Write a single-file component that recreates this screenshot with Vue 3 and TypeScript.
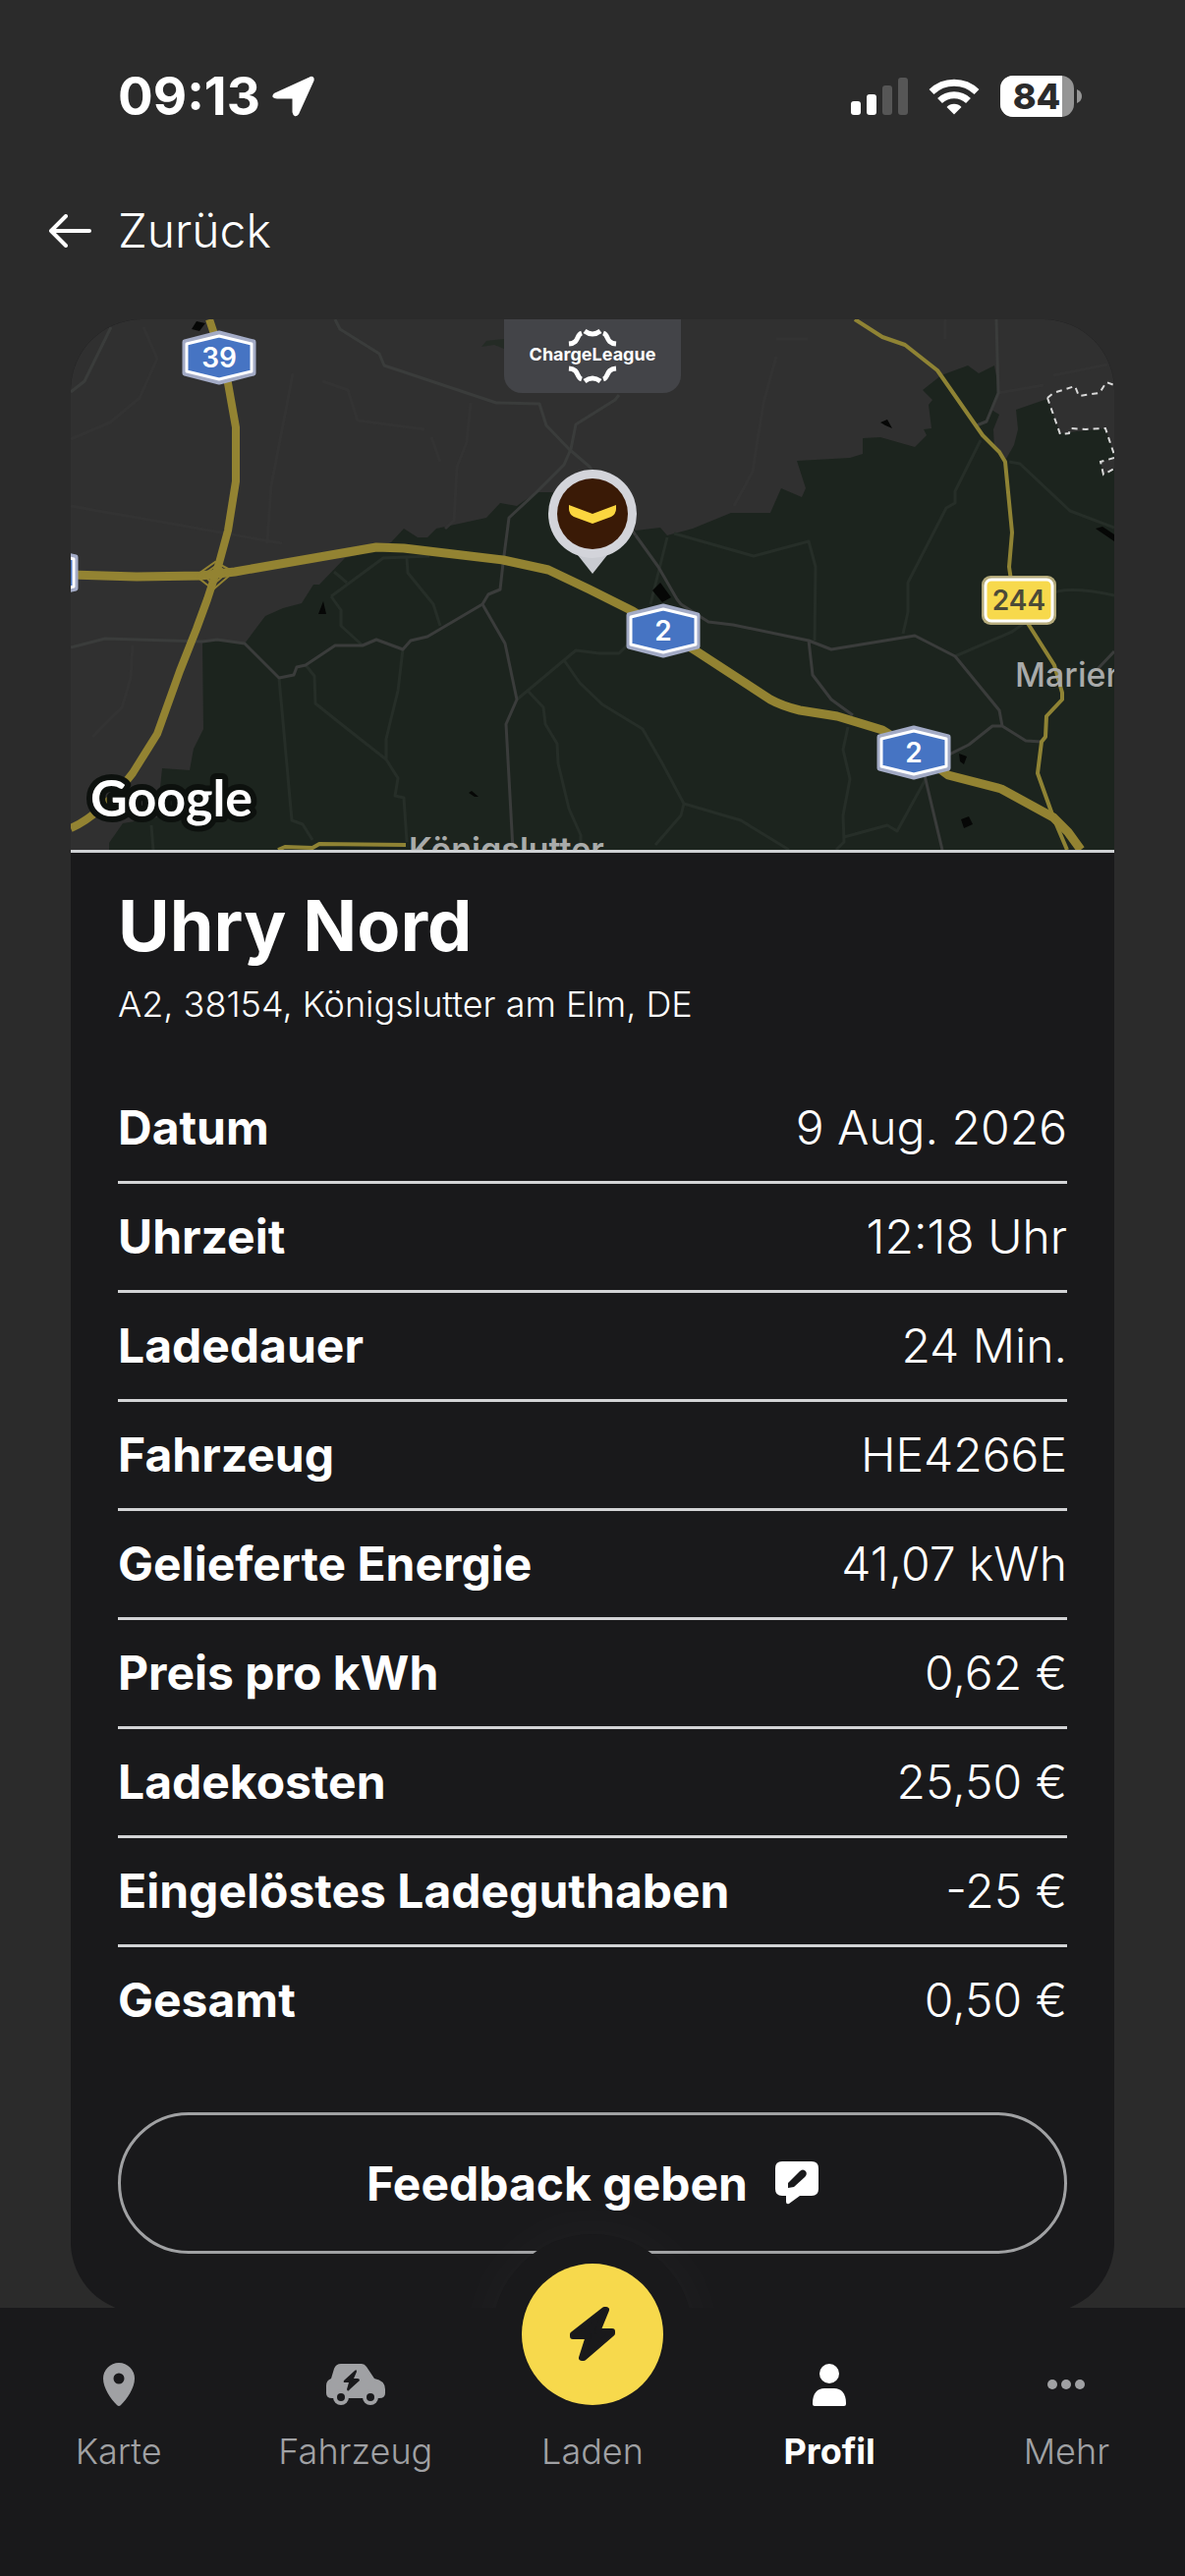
<script setup lang="ts">
interface Detail {
  label: string
  value: string
}

interface Tab {
  id: string
  label: string
}

interface Shield {
  x: number
  y: number
  text: string
}

const details: Detail[] = [
  { label: 'Datum', value: '9 Aug. 2026' },
  { label: 'Uhrzeit', value: '12:18 Uhr' },
  { label: 'Ladedauer', value: '24 Min.' },
  { label: 'Fahrzeug', value: 'HE4266E' },
  { label: 'Gelieferte Energie', value: '41,07 kWh' },
  { label: 'Preis pro kWh', value: '0,62 €' },
  { label: 'Ladekosten', value: '25,50 €' },
  { label: 'Eingelöstes Ladeguthaben', value: '-25 €' },
  { label: 'Gesamt', value: '0,50 €' },
]

const tabs: Tab[] = [
  { id: 'karte', label: 'Karte' },
  { id: 'fahrzeug', label: 'Fahrzeug' },
  { id: 'laden', label: 'Laden' },
  { id: 'profil', label: 'Profil' },
  { id: 'mehr', label: 'Mehr' },
]

const activeTab = 'profil'

const motorways: Shield[] = [
  { x: 151, y: 39, text: '39' },
  { x: 603, y: 317, text: '2' },
  { x: 858, y: 441, text: '2' },
  { x: -30, y: 258, text: '' },
]
</script>

<template>
  <div class="screen">
    <header class="status">
      <div class="status-left">
        <span class="time">09:13</span>
        <svg width="44" height="42" viewBox="0 0 44 42" aria-hidden="true">
          <path d="M3 19 38 3Q42 1 41 5L26 38Q23 42 22 37V23Q22 22 21 22H5Q0 22 3 19Z" fill="#fff" stroke="#fff" stroke-width="3" stroke-linejoin="round" />
        </svg>
      </div>
      <div class="status-right">
        <svg width="58" height="38" viewBox="0 0 58 38" aria-hidden="true">
          <rect x="0" y="24" width="10" height="14" rx="3" fill="#fff" />
          <rect x="16" y="17" width="10" height="21" rx="3" fill="#fff" />
          <rect x="32" y="8" width="10" height="30" rx="3" fill="#565656" />
          <rect x="48" y="0" width="10" height="38" rx="3" fill="#565656" />
        </svg>
        <svg width="52" height="38" viewBox="0 0 52 38" aria-hidden="true">
          <g fill="none" stroke="#fff" stroke-width="7">
            <path d="M3 14.500a33 33 0 0 1 46 0" />
            <path d="M11.500 23.500a21 21 0 0 1 29 0" />
          </g>
          <path d="M26 37.500 18.500 30a10.500 10.500 0 0 1 15 0Z" fill="#fff" />
        </svg>
        <svg width="83" height="42" viewBox="0 0 83 42" aria-hidden="true">
          <defs>
            <clipPath id="battery"><rect width="75" height="42" rx="13" /></clipPath>
          </defs>
          <g clip-path="url(#battery)">
            <rect width="75" height="42" fill="#959595" />
            <rect width="63" height="42" fill="#fff" />
          </g>
          <path d="M78 14q5 2 5 7t-5 7Z" fill="#959595" />
          <text x="37" y="34" text-anchor="middle" class="battery-text">84</text>
        </svg>
      </div>
    </header>

    <button class="back" type="button">
      <svg width="44" height="34" viewBox="0 0 44 34" fill="none" stroke="#fff" stroke-width="4" stroke-linecap="round" stroke-linejoin="round" aria-hidden="true">
        <path d="M42 17H3M18 2 3 17 18 32" />
      </svg>
      <span>Zurück</span>
    </button>

    <main class="card">
      <div class="map">
        <svg class="map-canvas" viewBox="0 0 1062 540" preserveAspectRatio="xMidYMid slice" role="img" aria-label="Kartenausschnitt">
          <rect width="1062" height="540" fill="#303030" />
          <path
            fill="#1c241e"
            d="M39 540V533L53 513 88 507 93 457 121 459 125 437 135 417 134 328 149 326 177 330 198 302 216 294 235 289 247 270 253 270 279 243 311 235 326 227 339 213 353 222 363 222 372 213 423 202 437 187 454 190 474 176H520L575 215 600 212 607 220 633 213 672 197H712L723 172 744 181 748 172 739 144 793 141 806 137V121L824 120 859 130 871 118 868 112 876 111 873 87 877 82 867 72 886 57 913 47 924 55 940 47 945 75 937 92 945 97 939 112 940 132 952 142 960 128 964 112 962 92 994 81 1007 116 1053 111 1062 138V540Z"
          />
          <path fill="#242b25" d="M418 28 423 22 441 20V30L431 26Z" />
          <path fill="#303030" d="M1048 145 1062 141V152L1051 158Z" />

          <g fill="none" stroke="#262e28" stroke-width="3" stroke-linejoin="round">
            <path d="M212 365 225 510 236 514 246 530M239 352 248 363 249 391 279 415 321 448 333 467 330 485 339 487 342 532M338 336 333 378 321 427V448" />
            <path d="M454 387 465 378 502 347 514 337 538 340 558 340 598 300M502 347 518 370 541 392 582 417 602 452 624 493 682 510 731 540M624 493 621 505 595 535M465 378 481 395 483 412 495 432 496 452 507 498 519 525V540" />
            <path d="M791 415 786 438 793 468 786 505 787 532 779 540M787 527 831 515 841 521 870 468M900 343 958 318 975 306 995 281Q1010 270 1062 281" />
            <path d="M614 218 695 241 751 226 758 252 757 327M926 123 900 175V187L891 192 852 268V298L847 320M955 145 966 147 1017 195 1062 212M590 290 607 222" />
            <path d="M265 282 318 243 365 241M342 243 343 258 369 290 376 312M265 282 275 296V312L297 332M268 257 281 268M82 515 84 540" />
          </g>
          <g fill="none" stroke="#333333" stroke-width="3" stroke-linejoin="round">
            <path d="M226 55 204 170 200 228M256 63 282 72 292 103 360 112M407 85 403 125 393 150 390 205 381 213M367 120 376 145M0 190 215 228M63 332 61 365 52 395 22 425M74 8 88 40 70 80 40 105 0 122" />
            <path d="M718 38 705 85 694 155 675 190M890 0V20M944 75 990 67M1000 57 1055 46M718 20 750 20" />
          </g>
          <g fill="none" stroke="#3a3c3b" stroke-width="3" stroke-linejoin="round">
            <path d="M269 0 274 10 314 35 319 47 433 85 477 86 484 108 507 132 528 150 575 220" />
            <path d="M558 77 554 82 514 107 509 132 502 148 474 176 446 202 440 248 437 275 425 280 419 290 363 323 346 327 338 336 311 326 297 332H269L239 352 230 354 227 362 212 365 177 330 149 326 134 328 35 325 0 334" />
            <path d="M419 290 442 330 454 387 443 412 450 540" />
            <path d="M575 220 598 252 617 285 621 290 649 308 674 311 751 327 774 336 859 322 900 343 945 398 948 414 972 429 988 430M948 414H938L914 433 880 450M751 327 755 362 774 387 796 403M868 460 887 540M1045 356 1062 338" />
            <path d="M942 0 944 75 932 104 922 108M41 8 14 63 0 74" />
          </g>

          <g fill="none" stroke="#8f8334" stroke-width="4" stroke-linejoin="round">
            <path d="M798 0 826 18 849 26 882 52 928 118 945 135 951 145 958 217 955 252 960 286 975 311 1001 352 1009 380V387L993 404 992 425 988 430 984 462 1000 507 1014 540" />
            <path d="M211 540 218 537 246 538 253 534 341 535" />
          </g>
          <g fill="none" stroke="#938332" stroke-width="8" stroke-linejoin="round">
            <path d="M141 0 151 30 160 65 168 110V165L160 215 151 248 139 285 128 315 111 358 88 422 63 462Q30 505 0 518" />
            <path stroke-width="9" d="M0 260 67 262 132 261 167 257 311 232 339 233 440 245 486 255 528 275 572 297 637 338 712 387Q725 394 742 398L780 404 826 418 858 438 893 464 947 478 1000 507 1015 522 1028 540" />
          </g>
          <g fill="none" stroke="#938332" stroke-width="2">
            <path d="M127 261 147 247 166 257 145 275ZM135 260 145 270 159 258 149 250Z" />
          </g>

          <g fill="#060706">
            <path d="M128 2 137 4 131 12 123 10ZM824 105 831 102 836 111 829 108ZM1043 213 1050 211 1062 219V226ZM592 276 600 268 611 283 602 288ZM257 287 252 300H260ZM408 480 415 486 411 486 405 482ZM904 442 912 445 909 453 905 450ZM906 509 914 506 918 514 909 518Z" />
          </g>
          <g fill="none" stroke="#d8d8d8" stroke-width="2" stroke-dasharray="6 5">
            <path d="M994 80 1000 75 1022 68 1026 78 1047 75 1054 64 1062 67M994 80 1007 117 1016 116 1017 111 1033 112 1053 111 1062 138M1062 141 1048 145 1051 158 1062 152" />
          </g>

          <g v-for="(shield, i) in motorways" :key="i" :transform="`translate(${shield.x} ${shield.y})`">
            <path d="M0 -25 35 -16V16L0 25 -35 16V-16Z" fill="#a3abc6" stroke="#a3abc6" stroke-width="5" stroke-linejoin="round" />
            <path d="M0 -22 33 -14V14L0 22 -33 14V-14Z" fill="#4674c3" stroke="#fff" stroke-width="3" stroke-linejoin="round" />
            <text y="10" text-anchor="middle" class="shield-text">{{ shield.text }}</text>
          </g>
          <rect x="927" y="261" width="76" height="50" rx="9" fill="#b5ab7c" />
          <rect x="931" y="265" width="68" height="42" rx="6" fill="#f7d94c" stroke="#fff" stroke-width="3" />
          <text x="965" y="296" text-anchor="middle" class="shield-text dark">244</text>

          <text x="961" y="374" class="place">Marien</text>
          <text x="344" y="552" class="place town">Königslutter</text>
          <text x="20" y="506" class="google">Google</text>

          <g>
            <path d="M516 240 531 259 546 240Z" fill="#c9cbd1" />
            <circle cx="531" cy="198" r="45" fill="#d3d4da" />
            <circle cx="531" cy="198" r="36" fill="#3a1a06" />
            <path d="M507 189 531 198 555 189V193Q555 198 550 201L531 208 512 201Q507 198 507 193Z" fill="#fbd63f" />
          </g>
        </svg>
        <div class="partner">
          <svg width="180" height="75" viewBox="0 0 180 75" role="img" aria-label="ChargeLeague">
            <g fill="none" stroke="#fff" stroke-width="5">
              <path d="M66 25C77 24 73 16 79 14M114 25C103 24 107 16 101 14M82 12Q90 18 98 12" />
              <path d="M66 50C77 51 73 59 79 61M114 50C103 51 107 59 101 61M82 63Q90 57 98 63" />
            </g>
            <text x="90" y="42" text-anchor="middle" class="partner-text">ChargeLeague</text>
          </svg>
        </div>
      </div>

      <div class="body">
        <h1>Uhry Nord</h1>
        <p class="address">A2, 38154, Königslutter am Elm, DE</p>
        <dl class="details">
          <div v-for="detail in details" :key="detail.label" class="row">
            <dt>{{ detail.label }}</dt>
            <dd>{{ detail.value }}</dd>
          </div>
        </dl>
        <button class="feedback" type="button">
          <span>Feedback geben</span>
          <svg width="44" height="44" viewBox="0 0 44 44" aria-hidden="true">
            <path d="M7 0H37Q44 0 44 7V28Q44 35 37 35H25L14 43Q11 44 11 41V35H7Q0 35 0 28V7Q0 0 7 0Z" fill="#fff" />
            <path d="M13 27V22L25 10Q28 7 31 10 33 13 30 16L19 26Z" fill="#19191b" />
          </svg>
        </button>
      </div>
    </main>

    <nav class="tabs" aria-label="Hauptnavigation">
      <a v-for="tab in tabs" :key="tab.id" :href="`#${tab.id}`" class="tab" :class="{ active: tab.id === activeTab }">
        <span class="tab-icon">
          <svg v-if="tab.id === 'karte'" width="32" height="44" viewBox="0 0 32 44" aria-hidden="true">
            <path fill="currentColor" fill-rule="evenodd" d="M16 0A16 16 0 0 1 32 16C32 26 24 37 18 43Q16 45 14 43C8 37 0 26 0 16A16 16 0 0 1 16 0ZM16 10.500A5.500 5.500 0 1 0 16 21.500 5.500 5.500 0 1 0 16 10.500Z" />
          </svg>
          <svg v-else-if="tab.id === 'fahrzeug'" width="60" height="44" viewBox="0 0 60 44" aria-hidden="true">
            <path fill="currentColor" d="M15 1H36Q39 1 41 4L49 16Q60 18 60 27V31Q60 36 54 36H6Q0 36 0 31V23Q0 18 5 16L8 6Q10 1 15 1Z" />
            <circle cx="15" cy="35" r="8" fill="currentColor" />
            <circle cx="45" cy="35" r="8" fill="currentColor" />
            <circle cx="15" cy="35" r="4" fill="#19191b" />
            <circle cx="45" cy="35" r="4" fill="#19191b" />
            <path d="M29 8 18 18Q17 20 19 20H23L21 27Q22 30 24 27L34 18Q34 16 32 16H28L31 9Q31 6 29 8Z" fill="#19191b" />
          </svg>
          <span v-else-if="tab.id === 'laden'" class="charge">
            <svg width="48" height="58" viewBox="0 0 48 58" aria-hidden="true">
              <path d="M36 4 4 29V31H20L13 53H15L44 28V26H29L38 4Z" fill="#19191b" stroke="#19191b" stroke-width="6" stroke-linejoin="round" />
            </svg>
          </span>
          <svg v-else-if="tab.id === 'profil'" width="36" height="44" viewBox="0 0 36 44" aria-hidden="true">
            <circle cx="18" cy="11" r="10" fill="currentColor" />
            <path d="M1 42V41C1 31 6 26 13 26H23C30 26 35 31 35 41V42Q35 44 33 44H3Q1 44 1 42Z" fill="currentColor" />
          </svg>
          <svg v-else width="38" height="10" viewBox="0 0 38 10" fill="currentColor" aria-hidden="true">
            <circle cx="5" cy="5" r="5" />
            <circle cx="19" cy="5" r="5" />
            <circle cx="33" cy="5" r="5" />
          </svg>
        </span>
        <span class="tab-label">{{ tab.label }}</span>
      </a>
    </nav>
  </div>
</template>

<style>
body {
  margin: 0;
  background: #2b2b2b;
}
</style>

<style scoped>
.screen {
  box-sizing: border-box;
  min-height: 100vh;
  padding-bottom: 268px;
  background: #2b2b2b;
  color: #fff;
  font-family: Inter, "Open Sans", sans-serif;
  font-size: 48px;
  font-weight: 300;
}

svg {
  display: block;
  flex: none;
}

.status {
  display: flex;
  align-items: center;
  justify-content: space-between;
  padding: 74px 105px 0 120px;
  height: 48px;
}

.status-left {
  display: flex;
  align-items: center;
  gap: 12px;
}

.time {
  font-size: 53px;
  font-weight: 700;
  line-height: 48px;
}

.status-right {
  display: flex;
  align-items: center;
  gap: 21px;
}

.battery-text {
  font-size: 36px;
  font-weight: 800;
  fill: #2b2b2b;
}

.back {
  display: flex;
  align-items: center;
  gap: 27px;
  margin: 83px 0 60px 49px;
  padding: 0;
  border: 0;
  background: none;
  color: inherit;
  font: inherit;
  line-height: 60px;
}

.card {
  margin: 0 72px;
  border-radius: 72px;
  overflow: hidden;
  background: #19191b;
}

.map {
  position: relative;
  border-bottom: 3px solid #cfd1d4;
}

.map-canvas {
  width: 100%;
  height: 540px;
}

.shield-text {
  font-size: 28px;
  font-weight: 600;
  fill: #fff;
}

.shield-text.dark {
  fill: #4c4a38;
}

.place {
  font-size: 34px;
  font-weight: 500;
  fill: #a9abaa;
}

.place.town {
  font-weight: 600;
}

.google {
  font-family: Lato, sans-serif;
  font-size: 52px;
  font-weight: 700;
  fill: #fff;
  stroke: #0d110e;
  stroke-width: 12px;
  stroke-linejoin: round;
  paint-order: stroke;
}

.partner {
  position: absolute;
  top: 0;
  left: 0;
  right: 0;
  width: 180px;
  margin: 0 auto;
  border-radius: 0 0 18px 18px;
  background: #434448;
}

.partner-text {
  font-size: 18px;
  font-weight: 700;
  fill: #fff;
}

.body {
  padding: 30px 48px 60px;
}

h1 {
  margin: 0;
  font-size: 72px;
  font-weight: 700;
  line-height: 88px;
}

.address {
  margin: 12px 0 48px;
  font-size: 36px;
  line-height: 48px;
}

.details {
  margin: 0;
}

.row {
  display: flex;
  justify-content: space-between;
  line-height: 108px;
}

.row + .row {
  border-top: 3px solid #d3d4d6;
}

dt {
  font-weight: 700;
}

dd {
  margin: 0;
}

.feedback {
  display: flex;
  align-items: center;
  justify-content: center;
  gap: 28px;
  box-sizing: border-box;
  width: 100%;
  height: 144px;
  margin-top: 60px;
  padding: 0;
  border: 3px solid #a0a1a3;
  border-radius: 72px;
  background: none;
  color: inherit;
  font: inherit;
  font-weight: 700;
}

.tabs {
  position: fixed;
  left: 0;
  right: 0;
  bottom: 0;
  isolation: isolate;
  display: grid;
  grid-template-columns: repeat(5, 1fr);
  box-sizing: border-box;
  height: 273px;
  padding-top: 56px;
}

.tabs::before {
  content: "";
  position: absolute;
  z-index: -2;
  top: -75px;
  left: calc(50% - 102px);
  width: 204px;
  height: 204px;
  border-radius: 50%;
  background: #19191b;
  box-shadow: 0 0 72px rgba(255, 255, 255, 0.04);
}

.tabs::after {
  content: "";
  position: absolute;
  z-index: -1;
  inset: 0;
  background: #19191b;
}

.tab {
  position: relative;
  display: flex;
  flex-direction: column;
  align-items: center;
  gap: 22px;
  color: #a0a1a4;
  text-decoration: none;
}

.tab-icon {
  display: flex;
  align-items: center;
  justify-content: center;
  height: 44px;
}

.tab-label {
  font-size: 36px;
  line-height: 48px;
}

.tab.active {
  color: #fff;
}

.tab.active .tab-label {
  font-weight: 700;
}

.charge {
  position: absolute;
  top: -101px;
  display: flex;
  align-items: center;
  justify-content: center;
  width: 144px;
  height: 144px;
  border-radius: 50%;
  background: #f7d94c;
}
</style>
